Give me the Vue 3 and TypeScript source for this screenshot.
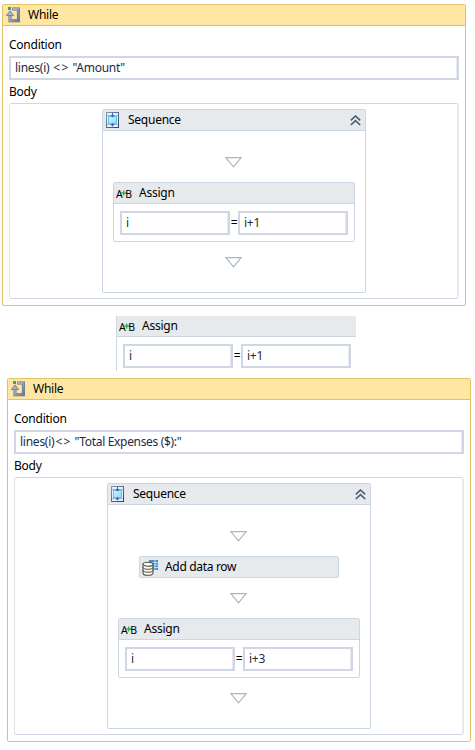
<script setup lang="ts">
interface Step {
  kind: 'assign' | 'row'
  to?: string
  value?: string
}
interface Loop {
  id: string
  left: string
  right: string
  steps: Step[]
}

const first: Loop = {
  id: 'first',
  left: 'lines(i) ',
  right: ' "Amount"',
  steps: [{ kind: 'assign', to: 'i', value: 'i+1' }],
}
const second: Loop = {
  id: 'second',
  left: 'lines(i)',
  right: ' "Total Expenses ($):"',
  steps: [{ kind: 'row' }, { kind: 'assign', to: 'i', value: 'i+3' }],
}
const blocks: (Loop | null)[] = [first, null, second]
</script>

<template>
  <svg class="defs" aria-hidden="true">
    <defs>
      <linearGradient id="g-loop" x1="0" y1="0" x2="1" y2="1">
        <stop offset="0" stop-color="#b4c0d2" />
        <stop offset="1" stop-color="#6d7f9f" />
      </linearGradient>
      <linearGradient id="g-frame" x1="0" y1="0" x2="1" y2="1">
        <stop offset="0" stop-color="#8795b0" />
        <stop offset="1" stop-color="#2f416b" />
      </linearGradient>
      <linearGradient id="g-cyan" x1="0" y1="0" x2="1" y2="1">
        <stop offset="0" stop-color="#d4f8ff" />
        <stop offset="1" stop-color="#7fdcf4" />
      </linearGradient>
      <symbol id="i-loop" viewBox="0 0 14 16">
        <path d="M6 2H12.4V13.8H4V7" fill="none" stroke="#5f6d88" stroke-width="3" />
        <path d="M6.5 2H12.4V13.8H4V7" fill="none" stroke="url(#g-loop)" stroke-width="1.9" />
        <path d="M4 3.8L7.8 8.6H.2Z" fill="#a3b1c7" stroke="#62718c" stroke-width=".7" />
        <rect x="2" y="0" width="3" height="3" fill="#36a867" />
      </symbol>
      <symbol id="i-seq" viewBox="0 0 13 16">
        <rect x=".5" y=".5" width="12" height="15" fill="#e6f0fb" stroke="url(#g-frame)" />
        <path d="M1 3.5H12M1 12.5H12" stroke="#a5bcdf" />
        <rect x="2.5" y="4.5" width="8" height="7" fill="url(#g-cyan)" stroke="#69bfe0" />
        <path d="M6.5 1V4M6.5 11V14" stroke="#3a66c0" />
        <path d="M4.3 3.2H8.7L6.5 5.6ZM4.3 12.2H8.7L6.5 14.6Z" fill="#2c5cc4" />
      </symbol>
      <symbol id="i-data" viewBox="0 0 17 17">
        <path d="M7 1H16V11H11V5H7Z" fill="#3b8fd0" />
        <path d="M7 3.5H16M10 6H16M11 8.5H16M13 1V11" stroke="#d7ebf8" stroke-width=".8" />
        <path
          d="M1 5.5V14C1 15.4 3.2 16.3 6 16.3S11 15.4 11 14V5.5"
          fill="#fbfaf7" stroke="#4f4a43" stroke-width="1.1"
        />
        <ellipse cx="6" cy="5.2" rx="5" ry="2" fill="#fbfaf7" stroke="#4f4a43" stroke-width="1.1" />
        <path
          d="M1 8.3C1 11 11 11 11 8.3M1 11.2C1 13.9 11 13.9 11 11.2"
          fill="none" stroke="#4f4a43" stroke-width="1"
        />
      </symbol>
      <symbol id="i-plus" viewBox="0 0 6 6">
        <path d="M.2 3H5.8M2.7 .5V5.5" stroke="#2fb04c" stroke-width="1.4" fill="none" />
      </symbol>
      <symbol id="i-up" viewBox="0 0 11 11">
        <path d="M.8 5.3L5.5 1L10.2 5.3M.8 10L5.5 5.7L10.2 10" fill="none" stroke="#4d5a70" stroke-width="1.6" />
      </symbol>
      <symbol id="i-drop" viewBox="0 0 17 11">
        <path d="M.8 .6H16.2L8.5 9.8Z" fill="#fff" stroke="#a9b5c6" stroke-width="1.2" />
      </symbol>
    </defs>
  </svg>

  <main class="canvas">
    <template v-for="(b, n) in blocks" :key="n">
      <section v-if="b" class="while" :class="b.id">
        <header class="while-head">
          <svg class="loop"><use href="#i-loop" /></svg>
          <span>While</span>
        </header>
        <div class="while-main">
          <div class="label">Condition</div>
          <div class="field"><span>{{ b.left }}</span><span class="op">&lt;&gt;</span><span class="right">{{ b.right }}</span></div>
          <div class="label body-label">Body</div>
          <div class="body">
            <div class="sequence">
              <header class="seq-head">
                <svg class="seq"><use href="#i-seq" /></svg>
                <span class="seq-title">Sequence</span>
                <svg class="up"><use href="#i-up" /></svg>
              </header>
              <div class="steps">
                <svg class="drop"><use href="#i-drop" /></svg>
                <template v-for="(s, k) in b.steps" :key="k">
                  <div v-if="s.kind === 'row'" class="data-row">
                    <svg class="data"><use href="#i-data" /></svg>
                    <span>Add data row</span>
                  </div>
                  <div v-else class="assign">
                    <header class="assign-head">
                      <span class="ab">A<svg><use href="#i-plus" /></svg>B</span>
                      <span>Assign</span>
                    </header>
                    <div class="assign-main">
                      <div class="field small">{{ s.to }}</div>
                      <span class="eq">=</span>
                      <div class="field small">{{ s.value }}</div>
                    </div>
                  </div>
                  <svg class="drop"><use href="#i-drop" /></svg>
                </template>
              </div>
            </div>
          </div>
        </div>
      </section>
      <div v-else class="assign loose">
        <header class="assign-head">
          <span class="ab">A<svg><use href="#i-plus" /></svg>B</span>
          <span>Assign</span>
        </header>
        <div class="assign-main">
          <div class="field small">i</div>
          <span class="eq">=</span>
          <div class="field small">i+1</div>
        </div>
      </div>
    </template>
  </main>
</template>

<style>
body {
  background: #fff;
}
</style>

<style scoped>
.defs {
  position: absolute;
  width: 0;
  height: 0;
}
.canvas {
  box-sizing: border-box;
  width: 475px;
  height: 750px;
  padding-top: 4px;
  overflow: hidden;
  font: 12px/16px "Noto Sans", "Open Sans", sans-serif;
  letter-spacing: -0.25px;
  color: #000;
}
.canvas * {
  box-sizing: border-box;
}
svg {
  display: block;
  flex: none;
}
.while {
  width: 464px;
  height: 302px;
  margin-left: 2px;
  border: 1px solid #e3c267;
  border-radius: 2px;
}
.while.second {
  height: 364px;
  margin: 7px 0 0 7px;
}
.while-head {
  display: flex;
  align-items: center;
  gap: 8px;
  height: 21px;
  padding: 0 3px 1px;
  background: #ffe6a2;
  border-bottom: 1px solid #e3c267;
}
.loop {
  width: 14px;
  height: 16px;
  margin-top: 1px;
}
.while-main {
  padding: 11px 6px 0;
}
.label {
  height: 19px;
}
.body-label {
  height: 23px;
  padding-top: 4px;
}
.field {
  display: flex;
  flex: none;
  align-items: center;
  height: 24px;
  padding: 0 4px 1px;
  color: #1c2b45;
  white-space: pre;
  border: 2px solid #d0d6e3;
  box-shadow: inset -1px 0 #e6e9ef;
}
.op {
  margin-left: 1px;
  letter-spacing: 1.3px;
}
.second .right {
  letter-spacing: -0.33px;
}
.body {
  padding: 5px 0 5px 92px;
  border: 1px solid #d0d6e3;
  border-right: 2px solid #e6e9ef;
  border-left-color: #dfe3eb;
  border-radius: 3px;
}
.sequence {
  width: 264px;
  border: 1px solid #ced5e2;
  border-radius: 2px;
}
.first .sequence {
  height: 184px;
}
.second .sequence {
  height: 246px;
}
.seq-head {
  display: flex;
  align-items: center;
  height: 21px;
  padding: 0 4px 0 3px;
  background: #e6eaed;
  border-bottom: 1px solid #ced5e2;
}
.seq {
  width: 13px;
  height: 16px;
}
.seq-title {
  flex: 1;
  padding: 0 0 1px 9px;
}
.up {
  width: 11px;
  height: 11px;
}
.steps {
  display: flex;
  flex-direction: column;
  align-items: center;
  gap: 14px;
  padding-top: 26px;
}
.drop {
  width: 17px;
  height: 11px;
  margin-right: 1px;
}
.data-row {
  display: flex;
  align-items: center;
  gap: 6px;
  width: 200px;
  height: 22px;
  margin-bottom: 1px;
  padding: 0 1px 0 2px;
  letter-spacing: -0.32px;
  background: #e6eaed;
  border: 1px solid #ced5e2;
  border-radius: 2px;
}
.data {
  width: 17px;
  height: 17px;
}
.assign {
  width: 242px;
  height: 60px;
  border: 1px solid #ced5e2;
  border-radius: 2px;
}
.steps > .assign {
  margin-bottom: 1px;
}
.assign-head {
  display: flex;
  align-items: center;
  height: 21px;
  padding: 0 2px 1px;
  background: #e6eaed;
  border-bottom: 1px solid #ced5e2;
}
.ab {
  display: flex;
  align-items: center;
  width: 23px;
  padding-top: 2px;
  font: 10.5px/12px "Noto Sans", sans-serif;
  letter-spacing: -0.5px;
}
.ab svg {
  width: 6px;
  height: 6px;
  margin: 0 -1.5px 1px -1.5px;
}
.assign-main {
  display: flex;
  padding: 7px 6px 0;
}
.small {
  width: 110px;
}
.eq {
  flex: none;
  width: 8px;
  line-height: 24px;
  text-align: center;
}
.loose {
  width: 240px;
  height: 55px;
  margin: 10px 0 0 116px;
  border-width: 0 0 0 1px;
  border-radius: 0;
}
</style>
